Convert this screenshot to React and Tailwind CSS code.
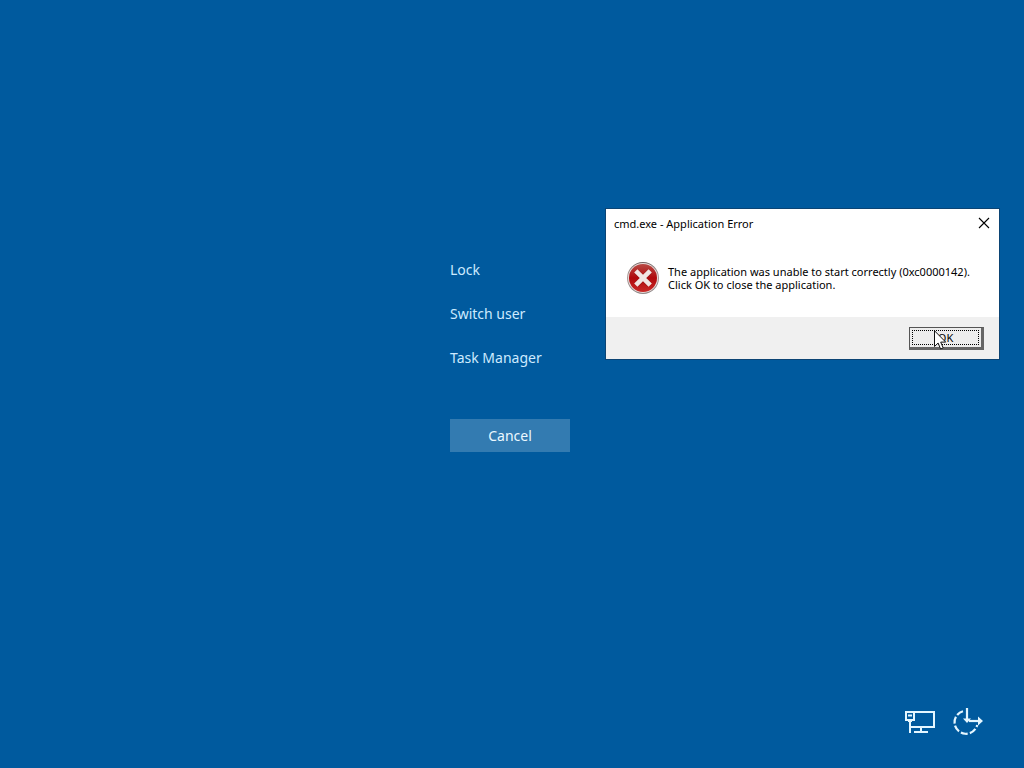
import React, { useState } from 'react';

const menuItems = ['Lock', 'Switch user', 'Task Manager'];

const ErrorIcon = () => (
    <svg viewBox="0 0 32 32" className="w-8 h-8 shrink-0" aria-hidden="true">
        <defs>
            <linearGradient id="rim" x1="0" y1="0" x2="0" y2="1">
                <stop offset="0" stopColor="#6d5f5f" />
                <stop offset="0.4" stopColor="#b09f9d" />
                <stop offset="1" stopColor="#8c8484" />
            </linearGradient>
            <linearGradient id="ball" x1="0" y1="0" x2="0" y2="1">
                <stop offset="0" stopColor="#b84a45" />
                <stop offset="0.5" stopColor="#b0090c" />
                <stop offset="1" stopColor="#c92a27" />
            </linearGradient>
        </defs>
        <circle cx="16" cy="16" r="16" fill="url(#rim)" />
        <circle cx="16" cy="16" r="15" fill="#eadcda" />
        <circle cx="16" cy="16" r="14" fill="url(#ball)" />
        <path d="M9.5 9.8l13 13M22.5 9.8l-13 13" stroke="#7d1512" strokeWidth="5.8" opacity="0.4" />
        <path d="M8.8 8.8l14.4 14.4M23.2 8.8L8.8 23.2" stroke="#f1e6e3" strokeWidth="4.6" />
    </svg>
);

const NetworkIcon = () => (
    <svg viewBox="0 0 30 24" className="w-[30px] h-6" fill="none" stroke="#e4f6ff" strokeWidth="2" aria-hidden="true">
        <path d="M9 2h20v15H6" />
        <path d="M1 2h8v8H1z" />
        <path d="M3 5.5h4" />
        <path d="M3 11h4" />
        <path d="M5 11v12" />
        <path d="M16 17v5M9 22h14" />
    </svg>
);

const PowerIcon = () => (
    <svg viewBox="0 0 32 28" className="w-8 h-7" fill="none" stroke="#e4f6ff" strokeWidth="2.2" aria-hidden="true">
        <path d="M11 3.2A11.5 11.5 0 1 0 25.2 17" strokeDasharray="7 2.2" />
        <path d="M15 0v12" />
        <path d="M11 10.5h8l-4 4.5z" fill="#e4f6ff" stroke="none" />
        <path d="M17 13h12" />
        <path d="M26 8.5l5 4.5-5 4.5z" fill="#e4f6ff" stroke="none" />
    </svg>
);

const Cursor = () => (
    <svg viewBox="0 0 13 20" className="absolute left-[25px] top-[3px] w-[13px] h-5 pointer-events-none" aria-hidden="true">
        <path d="M.5 .8v15.7l3.6-3.5 2.5 6 2.6-1.1-2.5-5.8h5z" fill="#fff" stroke="#111" />
    </svg>
);

const ErrorDialog = ({ onClose }) => (
    <section
        role="alertdialog"
        aria-labelledby="dialog-title"
        aria-describedby="dialog-text"
        className="absolute right-[25px] top-[209px] w-[393px] max-w-full bg-white text-black text-[11px] outline outline-1 outline-[#0b4474]"
    >
        <header className="flex h-7 items-center justify-between pl-2 pr-[9px]">
            <h1 id="dialog-title" className="pt-[2px]">cmd.exe - Application Error</h1>
            <button type="button" aria-label="Close" onClick={onClose}>
                <svg viewBox="0 0 12 12" className="w-3 h-3" stroke="#000" strokeWidth="1.1">
                    <path d="M1 1l10 10M11 1L1 11" />
                </svg>
            </button>
        </header>
        <div className="flex items-start gap-[9px] pl-[21px] pt-[25px] pb-[23px]">
            <ErrorIcon />
            <p id="dialog-text" className="pt-[3px] leading-[13px] whitespace-nowrap">
                The application was unable to start correctly (0xc0000142).
                <br />
                Click OK to close the application.
            </p>
        </div>
        <footer className="flex justify-end bg-[#f0f0f0] pt-[10px] pb-[9px] pr-[15px]">
            <div className="relative">
                <button
                    type="button"
                    onClick={onClose}
                    className="block w-[75px] h-[23px] p-[2px] bg-[#ededed] border border-[#555] border-r-[3px] border-b-[3px] border-r-[#666] border-b-[#666]"
                >
                    <span className="flex h-full items-center justify-center border border-dotted border-black leading-none">OK</span>
                </button>
                <Cursor />
            </div>
        </footer>
    </section>
);

const App = () => {
    const [showError, setShowError] = useState(true);

    return (
        <div className="relative flex min-h-screen flex-col bg-[#005a9e] font-['Noto_Sans','Open_Sans',sans-serif] text-[#cdeaff]">
            <main className="flex-1 pt-[259px]">
                <div className="mx-auto w-[124px] text-sm">
                    <ul className="flex flex-col gap-[22px]">
                        {menuItems.map((item) => (
                            <li key={item}>
                                <button type="button" className="block leading-[22px] whitespace-nowrap">{item}</button>
                            </li>
                        ))}
                    </ul>
                    <button type="button" className="mt-[50px] block w-[120px] h-[33px] bg-[#337bb1] text-[#ebf8ff]">
                        Cancel
                    </button>
                </div>
            </main>
            <footer className="flex items-start justify-end gap-[17px] pr-10 pb-8">
                <button type="button" aria-label="Network" className="pt-[2px]">
                    <NetworkIcon />
                </button>
                <button type="button" aria-label="Power">
                    <PowerIcon />
                </button>
            </footer>
            {showError && <ErrorDialog onClose={() => setShowError(false)} />}
        </div>
    );
};

export default App;
